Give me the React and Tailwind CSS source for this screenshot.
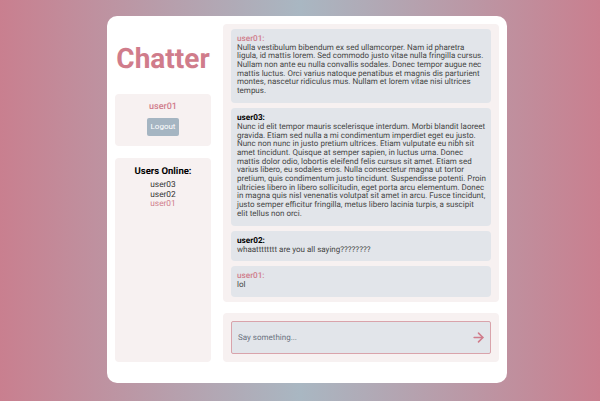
import { ArrowRight } from "lucide-react";

const messages = [
  {
    user: "user01",
    me: true,
    text: "Nulla vestibulum bibendum ex sed ullamcorper. Nam id pharetra ligula, id mattis lorem. Sed commodo justo vitae nulla fringilla cursus. Nullam non ante eu nulla convallis sodales. Donec tempor augue nec mattis luctus. Orci varius natoque penatibus et magnis dis parturient montes, nascetur ridiculus mus. Nullam et lorem vitae nisi ultrices tempus.",
  },
  {
    user: "user03",
    text: "Nunc id elit tempor mauris scelerisque interdum. Morbi blandit laoreet gravida. Etiam sed nulla a mi condimentum imperdiet eget eu justo. Nunc non nunc in justo pretium ultrices. Etiam vulputate eu nibh sit amet tincidunt. Quisque at semper sapien, in luctus urna. Donec mattis dolor odio, lobortis eleifend felis cursus sit amet. Etiam sed varius libero, eu sodales eros. Nulla consectetur magna ut tortor pretium, quis condimentum justo tincidunt. Suspendisse potenti. Proin ultricies libero in libero sollicitudin, eget porta arcu elementum. Donec in magna quis nisl venenatis volutpat sit amet in arcu. Fusce tincidunt, justo semper efficitur fringilla, metus libero lacinia turpis, a suscipit elit tellus non orci.",
  },
  { user: "user02", text: "whaatttttttt are you all saying????????" },
  { user: "user01", me: true, text: "lol" },
];

const Message = ({ user, me, text }) => (
  <div className="bg-[#e2e5ea] rounded-[4px] pl-[6px] pr-[4.8px] pt-[5px] pb-[7px] shrink-0">
    <div
      className={
        me
          ? "text-[8.2px] leading-[10px] font-medium text-[#d07c8b]"
          : "text-[8.2px] leading-[10px] font-bold text-black"
      }
    >
      {user}:
    </div>
    <p className="text-[8px] leading-[8.7px] font-normal text-[#454545]">{text}</p>
  </div>
);

export default function App() {
  return (
    <div
      className="w-[600px] h-[401px] flex justify-center pt-[16px] pl-[14px] bg-[linear-gradient(to_right,#c97f8f,#a9b7c2,#c97f8f)] [text-rendering:geometricPrecision]"
      style={{ fontFamily: "Roboto, 'Liberation Sans', sans-serif" }}
    >
      <div className="w-[400px] h-[367px] bg-white rounded-[10px] flex gap-3 pt-2 px-2 pb-[21px]">
        {/* sidebar */}
        <div className="w-[96px] flex flex-col">
          <div className="h-[70px] flex items-center justify-center">
            <h1 className="text-[28px] font-bold text-[#d07c8b] leading-none">Chatter</h1>
          </div>
          <div className="h-[52px] rounded-[4px] bg-[#f7f1f1] flex flex-col items-center pt-[8px]">
            <div className="text-[9px] leading-[11px] font-medium text-[#d07c8b]">user01</div>
            <button className="mt-[5px] w-[32px] h-[18px] rounded-[2px] bg-[#a5b5c2] text-white text-[8px] leading-none">
              Logout
            </button>
          </div>
          <div className="mt-3 flex-1 rounded-[4px] bg-[#f7f1f1] flex flex-col items-center pt-[8px]">
            <div className="text-[9.5px] leading-[11px] font-bold text-black">Users Online:</div>
            <div className="text-[8.3px] leading-[9.6px] text-[#333] text-center mt-[4px]">
              <div>user03</div>
              <div>user02</div>
              <div className="text-[#d07c8b]">user01</div>
            </div>
          </div>
        </div>

        {/* chat */}
        <div className="flex-1 flex flex-col gap-[11px]">
          <div className="flex-1 min-h-0 rounded-[4px] bg-[#f7f1f1] overflow-hidden flex flex-col justify-end gap-[5px] px-2 pb-[5px]">
            {messages.map((m, i) => (
              <Message key={i} {...m} />
            ))}
          </div>
          <div className="h-[49px] rounded-[4px] bg-[#f7f1f1] p-2">
            <div className="h-full rounded-[2px] border border-[#d9a3ab] bg-[#e2e5ea] flex items-center pl-[6px] pr-[4px]">
              <span className="flex-1 text-[8px] text-[#6b7280]">Say something...</span>
              <ArrowRight className="w-[15px] h-[15px] text-[#d07c8b]" strokeWidth={2.5} />
            </div>
          </div>
        </div>
      </div>
    </div>
  );
}
